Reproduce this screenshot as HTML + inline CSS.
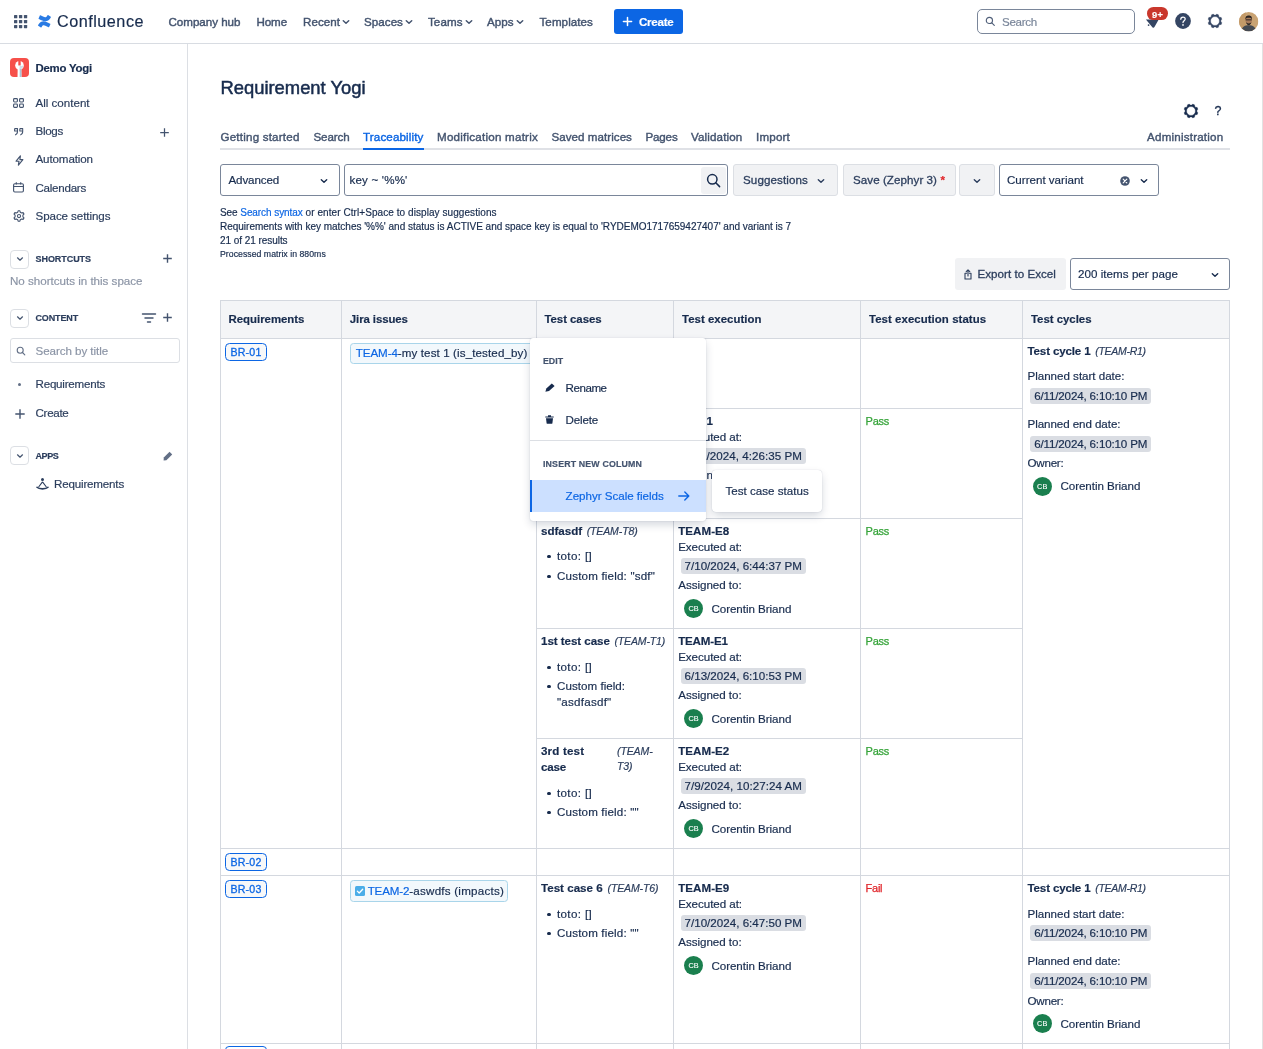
<!DOCTYPE html>
<html lang="en"><head>
<meta charset="utf-8">
<title>Traceability - Requirement Yogi - Confluence</title>
<style>
*{box-sizing:border-box;margin:0;padding:0}
html,body{width:1263px;height:1049px;overflow:hidden;background:#fff}
body{font-family:"Liberation Sans",Arial,sans-serif;color:#172b4d;font-size:12px;position:relative;will-change:transform;-webkit-text-stroke-width:.18px}
.abs{position:absolute}
.t{position:absolute;white-space:nowrap;line-height:16px;font-size:11.6px;color:#172b4d}
.m{-webkit-text-stroke:.3px currentColor}
a{color:#0c66e4;text-decoration:none}
svg{display:block;overflow:visible}
#topnav{position:absolute;left:0;top:0;width:1263px;height:44px;border-bottom:1px solid #d8dce2;background:#fff}
.nav{position:absolute;top:13.5px;font-size:11.6px;-webkit-text-stroke:.42px #44546f;color:#44546f;white-space:nowrap;line-height:16px}
#side{position:absolute;left:0;top:44px;width:188px;height:1005px;border-right:1px solid #dcdfe4;background:#fff}
.sitem{position:absolute;left:35.5px;font-size:11.6px;color:#2c3e5d;white-space:nowrap;line-height:16px}
.shead{position:absolute;left:35.5px;font-size:9px;font-weight:bold;color:#2c3e5d;white-space:nowrap;line-height:12px}
.tog{position:absolute;left:10px;width:19px;height:19px;border:1px solid #dcdfe4;border-radius:4px;background:#fff}
.tab{position:absolute;top:128.5px;font-size:11.6px;color:#44546f;white-space:nowrap;line-height:16px;-webkit-text-stroke:.4px #44546f}
.box{position:absolute;border:1px solid #7a869a;border-radius:3px;background:#fff}
.btn{position:absolute;border:1px solid #dcdfe4;border-radius:3px;background:#f1f2f4}
.vl{position:absolute;width:1px;background:#d4d8df}
.hl{position:absolute;height:1px;background:#d4d8df}
.th{position:absolute;top:311px;font-size:11.4px;font-weight:bold;color:#172b4d;white-space:nowrap;line-height:16px}
.b{font-weight:bold}
.i{font-style:italic;font-size:10.5px;color:#2c3e5d}
.date{position:absolute;height:15.500px;background:#dadde3;border-radius:3px}
.av{position:absolute;width:19px;height:19px;border-radius:50%;background:#1a7f4e;color:#fff;font-size:7.300px;-webkit-text-stroke:.12px #fff;text-align:center;line-height:19.500px}
.key{position:absolute;width:42px;height:18px;border:1.3px solid #0c66e4;border-radius:4.5px;background:#f7f8f9}
.pass{color:#36a43a;-webkit-text-stroke:.25px #36a43a}
.fail{color:#e0262b;-webkit-text-stroke:.25px #e0262b}
</style>
</head>
<body>
<div id="topnav">
<svg class="abs" style="left:13.900px;top:14.900px" width="14" height="14" viewBox="0 0 14 14" fill="#44546f"><rect x="0.00" y="0.00" width="3.300" height="3.300" rx=".6"></rect><rect x="4.95" y="0.00" width="3.300" height="3.300" rx=".6"></rect><rect x="9.90" y="0.00" width="3.300" height="3.300" rx=".6"></rect><rect x="0.00" y="4.95" width="3.300" height="3.300" rx=".6"></rect><rect x="4.95" y="4.95" width="3.300" height="3.300" rx=".6"></rect><rect x="9.90" y="4.95" width="3.300" height="3.300" rx=".6"></rect><rect x="0.00" y="9.90" width="3.300" height="3.300" rx=".6"></rect><rect x="4.95" y="9.90" width="3.300" height="3.300" rx=".6"></rect><rect x="9.90" y="9.90" width="3.300" height="3.300" rx=".6"></rect></svg>
<svg class="abs" style="left:38px;top:15.200px" width="13" height="12.600" viewBox="0 0 256 246"><path d="M9.26 187.33c-2.64 4.307-5.607 9.305-8.126 13.287a8.127 8.127 0 0 0 2.722 11.052l52.823 32.507a8.127 8.127 0 0 0 11.256-2.763c2.113-3.536 4.835-8.127 7.801-13.044 20.926-34.538 41.974-30.312 79.925-12.19l52.376 24.908a8.127 8.127 0 0 0 10.93-4.063l25.152-56.886a8.127 8.127 0 0 0-4.063-10.646c-11.052-5.201-33.034-15.562-52.823-25.111-71.189-34.579-131.691-32.344-177.972 42.949z" fill="#2a7be4"></path><path d="M246.115 58.232c2.641-4.307 5.607-9.305 8.127-13.287a8.127 8.127 0 0 0-2.723-11.052L198.696 1.386a8.127 8.127 0 0 0-11.580 2.682c-2.113 3.535-4.835 8.127-7.802 13.043-20.926 34.538-41.974 30.313-79.925 12.190L47.176 4.515a8.127 8.127 0 0 0-10.930 4.063L11.093 65.465a8.127 8.127 0 0 0 4.063 10.645c11.052 5.202 33.035 15.563 52.823 25.112 71.351 34.538 131.854 32.222 178.135-42.990z" fill="#2a7be4"></path></svg>
<div class="t" style="left: 57px; top: 9px; font-size: 16.2px; line-height: 24px; color: rgb(23, 43, 77); letter-spacing: 0.51px;">Confluence</div>
<div class="nav" style="left: 168.5px; letter-spacing: -0.02px;">Company hub</div>
<div class="nav" style="left: 256.5px; letter-spacing: -0.11px;">Home</div>
<div class="nav" style="left: 303px; letter-spacing: 0.04px;">Recent</div>
<div class="nav" style="left: 364px; letter-spacing: 0.05px;">Spaces</div>
<div class="nav" style="left: 428px; letter-spacing: 0.07px;">Teams</div>
<div class="nav" style="left: 487px; letter-spacing: 0.02px;">Apps</div>
<div class="nav" style="left: 539.5px; letter-spacing: 0.07px;">Templates</div>
<svg class="abs" style="left:342px;top:18px" width="8" height="8" viewBox="0 0 8 8"><path d="M1.3 2.8 L4 5.3 L6.7 2.8" fill="none" stroke="#44546f" stroke-width="1.5" stroke-linecap="round" stroke-linejoin="round"></path></svg>
<svg class="abs" style="left:404.5px;top:18px" width="8" height="8" viewBox="0 0 8 8"><path d="M1.3 2.8 L4 5.3 L6.7 2.8" fill="none" stroke="#44546f" stroke-width="1.5" stroke-linecap="round" stroke-linejoin="round"></path></svg>
<svg class="abs" style="left:465px;top:18px" width="8" height="8" viewBox="0 0 8 8"><path d="M1.3 2.8 L4 5.3 L6.7 2.8" fill="none" stroke="#44546f" stroke-width="1.5" stroke-linecap="round" stroke-linejoin="round"></path></svg>
<svg class="abs" style="left:515.5px;top:18px" width="8" height="8" viewBox="0 0 8 8"><path d="M1.3 2.8 L4 5.3 L6.7 2.8" fill="none" stroke="#44546f" stroke-width="1.5" stroke-linecap="round" stroke-linejoin="round"></path></svg>
<div class="abs" style="left:614px;top:9px;width:69px;height:25px;border-radius:3px;background:#0c66e4"></div>
<svg class="abs" style="left:621.5px;top:16px" width="11" height="11" viewBox="0 0 11 11"><path d="M5.500 1.400 V9.600 M1.400 5.500 H9.600" stroke="#fff" stroke-width="1.500" stroke-linecap="round"></path></svg>
<div class="t" style="left: 639px; top: 13.5px; font-size: 11.6px; font-weight: bold; color: rgb(255, 255, 255); letter-spacing: -0.27px;">Create</div>
<div class="abs" style="left:977px;top:9px;width:158px;height:25px;border:1px solid #7a869a;border-radius:5px;background:#fff"></div>
<svg class="abs" style="left:984.5px;top:15.5px" width="11" height="11" viewBox="0 0 11 11"><circle cx="4.400" cy="4.400" r="3.100" fill="none" stroke="#505f79" stroke-width="1.150"></circle><path d="M6.800 6.800 L9.300 9.300" stroke="#505f79" stroke-width="1.150" stroke-linecap="round"></path></svg>
<div class="t" style="left: 1002px; top: 13.5px; font-size: 11.6px; color: rgb(122, 134, 154); letter-spacing: -0.29px;">Search</div>
<svg class="abs" style="left:1144px;top:14px" width="16" height="16" viewBox="0 0 16 16"><path d="M1.900 5.600 L14.700 5.600 L10.600 12.800 C10 13.900 9.300 14.200 8.600 13.400 Z" fill="#344563"></path><circle cx="4.600" cy="11.100" r=".9" fill="#344563"></circle></svg>
<div class="abs" style="left:1147px;top:6.800px;width:21.200px;height:12.800px;border-radius:6.400px;background:#c9372c"></div>
<div class="t" style="left: 1152px; top: 8.7px; color: rgb(255, 255, 255); font-size: 9.3px; font-weight: bold; line-height: 13px; letter-spacing: 0.3px;">9+</div>
<svg class="abs" style="left:1175.400px;top:13.300px" width="16" height="16" viewBox="0 0 16 16"><circle cx="8" cy="8" r="7.900" fill="#344563"></circle><path d="M5.800 6.300 C5.800 4.900 6.800 4.100 8 4.100 C9.200 4.100 10.200 4.900 10.200 6.100 C10.200 7.700 8 7.700 8 9.500" fill="none" stroke="#fff" stroke-width="1.250" stroke-linecap="round"></path><circle cx="8" cy="11.900" r=".85" fill="#fff"></circle></svg>
<svg class="abs" style="left:1207.100px;top:13.100px" width="16" height="16" viewBox="0 0 16 16"><path fill-rule="evenodd" fill="#344563" stroke="#344563" stroke-width=".4" stroke-linejoin="round" d="M13.92 8.99 L14.89 9.71 L14.08 11.66 L12.88 11.49 L11.49 12.88 L11.66 14.08 L9.71 14.89 L8.99 13.92 L7.01 13.92 L6.29 14.89 L4.34 14.08 L4.51 12.88 L3.12 11.49 L1.92 11.66 L1.11 9.71 L2.08 8.99 L2.08 7.01 L1.11 6.29 L1.92 4.34 L3.12 4.51 L4.51 3.12 L4.34 1.92 L6.29 1.11 L7.01 2.08 L8.99 2.08 L9.71 1.11 L11.66 1.92 L11.49 3.12 L12.88 4.51 L14.08 4.34 L14.89 6.29 L13.92 7.01 Z M12.45 8.00 A4.45 4.45 0 1 0 3.55 8.00 A4.45 4.45 0 1 0 12.45 8.00 Z"></path></svg>
<svg class="abs" style="left:1238.800px;top:11.800px" width="19.400" height="19.400" viewBox="0 0 20 20"><defs><clipPath id="avc"><circle cx="10" cy="10" r="10"></circle></clipPath></defs><g clip-path="url(#avc)"><rect width="20" height="20" fill="#c9a373"></rect><rect x="0" y="0" width="7" height="20" fill="#c39a68"></rect><path d="M2.500 20 C2.800 15.500 5.500 13.600 10 13.600 C14.500 13.600 17.200 15.500 17.500 20 Z" fill="#454a52"></path><ellipse cx="10" cy="8.600" rx="3.300" ry="4.100" fill="#a87b5a"></ellipse><path d="M6.600 7.800 C6.300 4.600 8 3.600 10 3.600 C12 3.600 13.700 4.600 13.400 7.800 C12.800 6.400 12 6 10 6 C8 6 7.200 6.400 6.600 7.800 Z" fill="#2a2422"></path><path d="M7.200 10.400 C7.600 12.600 8.700 13.600 10 13.600 C11.300 13.600 12.400 12.600 12.800 10.400 C12 11.500 11.200 11.800 10 11.800 C8.800 11.800 8 11.500 7.200 10.400 Z" fill="#2f2926"></path><rect x="6.900" y="7.600" width="6.200" height="1" fill="#2a2422"></rect></g></svg>
</div>
<div id="side">
<div class="abs" style="left:10px;top:14px;width:19px;height:19px;border-radius:4px;background:#f6504a;overflow:hidden"><svg width="19" height="19" viewBox="0 0 19 19"><circle cx="9.500" cy="7.400" r="4.300" fill="#fff"></circle><rect x="8.300" y="2.800" width="2.400" height="4.700" rx=".6" fill="#f6504a"></rect><path d="M7.700 9.500 H11.300 L11.500 19 H7.500 Z" fill="#fff"></path><path d="M9.700 10.500 H11.320 L11.500 19 H9.700 Z" fill="#a9c5d6"></path><path d="M9.600 7.500 A3.900 3.900 0 0 0 13.400 7.300 L13.300 8.300 A3.900 3.900 0 0 1 9.600 11.200 Z" fill="#cfdde6"></path></svg></div>
<div class="t b" style="left: 35.5px; top: 16px; font-size: 11.4px; color: rgb(23, 43, 77); letter-spacing: -0.22px;">Demo Yogi</div>

<svg class="abs" style="left:13px;top:54px" width="11" height="10" viewBox="0 0 11 10" fill="none" stroke="#44546f" stroke-width="1.150"><rect x=".6" y=".6" width="3.800" height="3.400" rx=".9"></rect><rect x="6.600" y=".6" width="3.800" height="3.400" rx=".9"></rect><rect x=".6" y="6" width="3.800" height="3.400" rx=".9"></rect><rect x="6.600" y="6" width="3.800" height="3.400" rx=".9"></rect></svg>
<div class="sitem" style="top: 51px; letter-spacing: -0.01px;">All content</div>

<svg class="abs" style="left:14.300px;top:83.800px" width="9.500" height="7.500" viewBox="0 0 9.500 7.500" fill="none" stroke="#44546f" stroke-width="1.050" stroke-linejoin="round"><path d="M.6 .6 H3.500 V3.600 C3.500 5.400 2.700 6.500 1.100 6.900 M.6 .6 V3 H3.300"></path><path d="M5.800 .6 H8.700 V3.600 C8.700 5.400 7.900 6.500 6.300 6.900 M5.800 .6 V3 H8.500"></path></svg>
<div class="sitem" style="top: 79px; letter-spacing: -0.3px;">Blogs</div>
<svg class="abs" style="left:160px;top:84px" width="9" height="9" viewBox="0 0 9 9"><path d="M4.5 .2 V8.800 M.2 4.500 H8.800" stroke="#44546f" stroke-width="1.250"></path></svg>

<svg class="abs" style="left:15px;top:111px" width="9" height="11" viewBox="0 0 9 11"><path d="M5.400 .8 L1.100 6.200 H4 L3.400 10.200 L7.900 4.600 H4.900 Z" fill="none" stroke="#44546f" stroke-width="1.150" stroke-linejoin="round"></path></svg>
<div class="sitem" style="top: 106.5px; letter-spacing: -0.12px;">Automation</div>

<svg class="abs" style="left:13px;top:138.400px" width="11" height="10.600" viewBox="0 0 11 10.600" fill="none" stroke="#44546f" stroke-width="1.150"><rect x=".6" y="1.800" width="9.800" height="8.200" rx="1.200"></rect><path d="M.6 4.500 H10.400 M3.300 .2 V2.600 M7.700 .2 V2.600"></path></svg>
<div class="sitem" style="top: 136px; letter-spacing: -0.26px;">Calendars</div>

<svg class="abs" style="left:12.500px;top:165.900px" width="12" height="12" viewBox="0 0 12 12" fill="none" stroke="#44546f"><circle cx="6" cy="6" r="1.600" stroke-width="1.050"></circle><path d="M9.91 6.83 L10.97 7.85 L10.08 9.38 L8.68 8.97 L7.24 9.80 L6.88 11.23 L5.12 11.23 L4.76 9.80 L3.32 8.97 L1.92 9.38 L1.03 7.85 L2.09 6.83 L2.09 5.17 L1.03 4.15 L1.92 2.62 L3.32 3.03 L4.76 2.20 L5.12 0.77 L6.88 0.77 L7.24 2.20 L8.68 3.03 L10.08 2.62 L10.97 4.15 L9.91 5.17 Z" stroke-width="1.100" stroke-linejoin="round"></path></svg>
<div class="sitem" style="top: 164px; letter-spacing: -0.08px;">Space settings</div>

<div class="tog" style="top:205.500px"></div>
<svg class="abs" style="left:15.500px;top:211px" width="8" height="8" viewBox="0 0 8 8"><path d="M1.500 2.800 L4 5.200 L6.500 2.800" fill="none" stroke="#44546f" stroke-width="1.2" stroke-linecap="round" stroke-linejoin="round"></path></svg>
<div class="shead" style="top: 209px; letter-spacing: -0.06px;">SHORTCUTS</div>
<svg class="abs" style="left:163px;top:210px" width="9" height="9" viewBox="0 0 9 9"><path d="M4.500 .2 V8.800 M.2 4.500 H8.800" stroke="#44546f" stroke-width="1.400"></path></svg>
<div class="t" style="left: 10px; top: 229px; font-size: 11.6px; color: rgb(140, 149, 166); letter-spacing: -0.01px;">No shortcuts in this space</div>

<div class="tog" style="top:264.500px"></div>
<svg class="abs" style="left:15.500px;top:270px" width="8" height="8" viewBox="0 0 8 8"><path d="M1.500 2.800 L4 5.200 L6.500 2.800" fill="none" stroke="#44546f" stroke-width="1.2" stroke-linecap="round" stroke-linejoin="round"></path></svg>
<div class="shead" style="top: 268px; letter-spacing: -0.14px;">CONTENT</div>
<svg class="abs" style="left:141.500px;top:269px" width="14" height="10" viewBox="0 0 14 10"><path d="M.5 1 H13.500 M3 5 H11 M5.500 9 H8.500" stroke="#44546f" stroke-width="1.450" stroke-linecap="round"></path></svg>
<svg class="abs" style="left:163px;top:269px" width="9" height="9" viewBox="0 0 9 9"><path d="M4.500 .2 V8.800 M.2 4.500 H8.800" stroke="#44546f" stroke-width="1.400"></path></svg>

<div class="abs" style="left:10px;top:294.300px;width:170px;height:25.200px;border:1px solid #dcdfe4;border-radius:3px;background:#fff"></div>
<svg class="abs" style="left:15.500px;top:302px" width="10" height="10" viewBox="0 0 10 10"><circle cx="4.200" cy="4.200" r="3" fill="none" stroke="#626f86" stroke-width="1.100"></circle><path d="M6.500 6.500 L8.800 8.800" stroke="#626f86" stroke-width="1.100" stroke-linecap="round"></path></svg>
<div class="t" style="left: 35.5px; top: 299px; font-size: 11.6px; color: rgb(140, 149, 166); letter-spacing: -0.06px;">Search by title</div>

<div class="abs" style="left:18px;top:339px;width:3px;height:3px;border-radius:50%;background:#626f86"></div>
<div class="sitem" style="top: 332px; letter-spacing: -0.22px;">Requirements</div>

<svg class="abs" style="left:14.500px;top:364.500px" width="10" height="10" viewBox="0 0 10 10"><path d="M5 .3 V9.700 M.3 5 H9.700" stroke="#44546f" stroke-width="1.400"></path></svg>
<div class="sitem" style="top: 361px; letter-spacing: -0.3px;">Create</div>

<div class="tog" style="top:402px"></div>
<svg class="abs" style="left:15.500px;top:407.500px" width="8" height="8" viewBox="0 0 8 8"><path d="M1.500 2.800 L4 5.200 L6.500 2.800" fill="none" stroke="#44546f" stroke-width="1.200" stroke-linecap="round" stroke-linejoin="round"></path></svg>
<div class="shead" style="top: 406px; letter-spacing: -0.38px;">APPS</div>
<svg class="abs" style="left:163px;top:407px" width="10" height="10" viewBox="0 0 10 10"><path d="M6.600 .8 L9.200 3.400 L3.400 9.200 L.6 9.400 L.8 6.600 Z" fill="#626f86"></path></svg>

<svg class="abs" style="left:35.500px;top:433px" width="13" height="13" viewBox="0 0 13 13"><circle cx="6.500" cy="2.500" r="1.500" fill="#2c3e5d"></circle><path d="M6.500 4.800 L2.600 10 M6.500 4.800 L10.400 10" stroke="#2c3e5d" stroke-width="1.100" fill="none"></path><path d="M1 10.300 C3 12.400 10 12.400 12 10.300" stroke="#2c3e5d" stroke-width="1.600" fill="none" stroke-linecap="round"></path></svg>
<div class="sitem" style="left: 54px; top: 432px; letter-spacing: -0.18px;">Requirements</div>
</div>
<div id="main">
<div class="t" style="left: 220.5px; top: 75.6px; font-size: 18.4px; line-height: 24px; color: rgb(23, 43, 77); -webkit-text-stroke: 0.5px rgb(23, 43, 77); letter-spacing: -0.01px;">Requirement Yogi</div>
<svg class="abs" style="left:1183.100px;top:103.300px" width="16" height="16" viewBox="0 0 16 16"><path fill-rule="evenodd" fill="#172b4d" stroke="#172b4d" stroke-width=".4" stroke-linejoin="round" d="M13.92 8.99 L14.89 9.71 L14.08 11.66 L12.88 11.49 L11.49 12.88 L11.66 14.08 L9.71 14.89 L8.99 13.92 L7.01 13.92 L6.29 14.89 L4.34 14.08 L4.51 12.88 L3.12 11.49 L1.92 11.66 L1.11 9.71 L2.08 8.99 L2.08 7.01 L1.11 6.29 L1.92 4.34 L3.12 4.51 L4.51 3.12 L4.34 1.92 L6.29 1.11 L7.01 2.08 L8.99 2.08 L9.71 1.11 L11.66 1.92 L11.49 3.12 L12.88 4.51 L14.08 4.34 L14.89 6.29 L13.92 7.01 Z M12.45 8.00 A4.45 4.45 0 1 0 3.55 8.00 A4.45 4.45 0 1 0 12.45 8.00 Z"></path></svg>
<div class="t m" style="left:1214.500px;top:103px;font-size:12.500px;color:#172b4d">?</div>

<div class="tab" style="left: 220.5px; letter-spacing: 0.2px;">Getting started</div>
<div class="tab" style="left: 313.5px; letter-spacing: -0.12px;">Search</div>
<div class="tab" style="left: 363px; color: rgb(12, 102, 228); -webkit-text-stroke-color: rgb(12, 102, 228); letter-spacing: 0.14px;">Traceability</div>
<div class="tab" style="left: 437px; letter-spacing: 0.23px;">Modification matrix</div>
<div class="tab" style="left: 551.5px; letter-spacing: 0.04px;">Saved matrices</div>
<div class="tab" style="left: 645.5px; letter-spacing: -0.17px;">Pages</div>
<div class="tab" style="left: 691px; letter-spacing: 0.14px;">Validation</div>
<div class="tab" style="left: 756px; letter-spacing: 0.19px;">Import</div>
<div class="tab" style="left: 1147.1px; letter-spacing: 0.2px;">Administration</div>
<div class="abs" style="left:220px;top:148px;width:1010px;height:2px;background:#dfe1e6"></div>
<div class="abs" style="left:363px;top:148px;width:61px;height:2px;background:#0c66e4"></div>

<div class="box" style="left:220px;top:164px;width:120px;height:32px"></div>
<div class="t" style="left: 228.5px; top: 172px; letter-spacing: -0.13px;">Advanced</div>
<svg class="abs" style="left:320px;top:176.500px" width="8" height="8" viewBox="0 0 8 8"><path d="M1.300 2.800 L4 5.300 L6.700 2.800" fill="none" stroke="#172b4d" stroke-width="1.400" stroke-linecap="round" stroke-linejoin="round"></path></svg>

<div class="box" style="left:344px;top:164px;width:384px;height:32px"></div>
<div class="t" style="left: 349.5px; top: 172px; letter-spacing: 0.17px;">key ~ '%%'</div>
<div class="abs" style="left:701px;top:166.500px;width:25px;height:27px;background:#f1f2f4;border-radius:3px"></div>
<svg class="abs" style="left:706px;top:172.500px" width="15" height="15" viewBox="0 0 15 15"><circle cx="6.300" cy="6.300" r="4.700" fill="none" stroke="#172b4d" stroke-width="1.500"></circle><path d="M9.800 9.800 L13.600 13.600" stroke="#172b4d" stroke-width="1.500" stroke-linecap="round"></path></svg>

<div class="btn" style="left:732.500px;top:164px;width:105px;height:32px"></div>
<div class="t m" style="left: 743px; top: 172px; color: rgb(44, 62, 93); letter-spacing: 0.11px;">Suggestions</div>
<svg class="abs" style="left:816.500px;top:176.500px" width="8" height="8" viewBox="0 0 8 8"><path d="M1.300 2.800 L4 5.300 L6.700 2.800" fill="none" stroke="#2c3e5d" stroke-width="1.400" stroke-linecap="round" stroke-linejoin="round"></path></svg>

<div class="btn" style="left:842.500px;top:164px;width:113px;height:32px"></div>
<div class="t m" style="left: 853px; top: 172px; color: rgb(44, 62, 93); letter-spacing: 0.06px;">Save (Zephyr 3)</div>
<div class="t b" style="left:940.500px;top:172px;color:#e0262b;font-size:11.600px">*</div>

<div class="btn" style="left:958.500px;top:164px;width:36.500px;height:32px"></div>
<svg class="abs" style="left:973px;top:176.500px" width="8" height="8" viewBox="0 0 8 8"><path d="M1.300 2.800 L4 5.300 L6.700 2.800" fill="none" stroke="#2c3e5d" stroke-width="1.400" stroke-linecap="round" stroke-linejoin="round"></path></svg>

<div class="box" style="left:999px;top:164px;width:159.500px;height:32px"></div>
<div class="t" style="left: 1007px; top: 172px; letter-spacing: -0.01px;">Current variant</div>
<svg class="abs" style="left:1119.500px;top:175.500px" width="10" height="10" viewBox="0 0 10 10"><circle cx="5" cy="5" r="4.800" fill="#44546f"></circle><path d="M3.200 3.200 L6.800 6.800 M6.800 3.200 L3.200 6.800" stroke="#fff" stroke-width="1.200" stroke-linecap="round"></path></svg>
<svg class="abs" style="left:1139.500px;top:176.500px" width="8" height="8" viewBox="0 0 8 8"><path d="M1.300 2.800 L4 5.300 L6.700 2.800" fill="none" stroke="#172b4d" stroke-width="1.400" stroke-linecap="round" stroke-linejoin="round"></path></svg>

<div class="t" style="left:220px;top:206px;font-size:10px;line-height:13px"><span style="letter-spacing: -0.1px;">See</span> <a style="letter-spacing: -0.07px;">Search syntax</a> <span style="letter-spacing: 0.07px;">or enter Ctrl+Space to display suggestions</span></div>
<div class="t" style="left: 220px; top: 220px; font-size: 10px; line-height: 13px; letter-spacing: -0.01px;">Requirements with key matches '%%' and status is ACTIVE and space key is equal to 'RYDEMO1717659427407' and variant is 7</div>
<div class="t" style="left: 220px; top: 233.5px; font-size: 10px; line-height: 13px; letter-spacing: -0.05px;">21 of 21 results</div>
<div class="t" style="left: 220px; top: 247.5px; font-size: 8.7px; line-height: 12px; letter-spacing: 0.04px;">Processed matrix in 880ms</div>

<div class="abs" style="left:955px;top:258px;width:110.500px;height:32px;background:#f1f2f4;border-radius:3px"></div>
<svg class="abs" style="left:963.500px;top:268.500px" width="8" height="11" viewBox="0 0 8 11" fill="none" stroke="#2c3e5d" stroke-width="1.100" stroke-linecap="round" stroke-linejoin="round"><path d="M2.600 4.300 H1 V10 H7 V4.300 H5.400 M4 7 V1 M2.200 2.600 L4 .8 L5.800 2.600"></path></svg>
<div class="t m" style="left: 977.5px; top: 266px; color: rgb(44, 62, 93); letter-spacing: 0.03px;">Export to Excel</div>
<div class="box" style="left:1070px;top:258px;width:159.500px;height:32px"></div>
<div class="t" style="left: 1078px; top: 266px; letter-spacing: 0.04px;">200 items per page</div>
<svg class="abs" style="left:1211px;top:270.500px" width="8" height="8" viewBox="0 0 8 8"><path d="M1.300 2.800 L4 5.300 L6.700 2.800" fill="none" stroke="#172b4d" stroke-width="1.400" stroke-linecap="round" stroke-linejoin="round"></path></svg>
</div>
<div id="tbl">
<div class="abs" style="left:220px;top:300px;width:1010px;height:38px;background:#f4f5f7"></div>
<div class="vl" style="left:220px;top:300px;height:749px"></div>
<div class="vl" style="left:341px;top:300px;height:749px"></div>
<div class="vl" style="left:536px;top:300px;height:749px"></div>
<div class="vl" style="left:673px;top:300px;height:749px"></div>
<div class="vl" style="left:860px;top:300px;height:749px"></div>
<div class="vl" style="left:1022px;top:300px;height:749px"></div>
<div class="vl" style="left:1229px;top:300px;height:749px"></div>
<div class="hl" style="left:220px;top:300px;width:1010px"></div>
<div class="hl" style="left:220px;top:338px;width:1010px"></div>
<div class="hl" style="left:220px;top:848px;width:1010px"></div>
<div class="hl" style="left:220px;top:875px;width:1010px"></div>
<div class="hl" style="left:220px;top:1043px;width:1010px"></div>
<div class="hl" style="left:536px;top:408px;width:486px"></div>
<div class="hl" style="left:536px;top:518px;width:486px"></div>
<div class="hl" style="left:536px;top:628px;width:486px"></div>
<div class="hl" style="left:536px;top:738px;width:486px"></div>
<div class="th" style="left: 228.5px;">Requirements</div>
<div class="th" style="left: 349.8px; letter-spacing: -0.08px;">Jira issues</div>
<div class="th" style="left: 544.5px; letter-spacing: -0.04px;">Test cases</div>
<div class="th" style="left: 682px; letter-spacing: 0.04px;">Test execution</div>
<div class="th" style="left: 869px; letter-spacing: 0.07px;">Test execution status</div>
<div class="th" style="left: 1031px; letter-spacing: -0.01px;">Test cycles</div>
<div class="key" style="left:225px;top:343px"></div>
<div class="t m" style="left: 230.5px; top: 344px; color: rgb(12, 102, 228); font-size: 10.6px; letter-spacing: 0.19px;">BR-01</div>
<div class="key" style="left:225px;top:853px"></div>
<div class="t m" style="left: 230.5px; top: 854px; color: rgb(12, 102, 228); font-size: 10.6px; letter-spacing: 0.19px;">BR-02</div>
<div class="key" style="left:225px;top:880px"></div>
<div class="t m" style="left: 230.5px; top: 881px; color: rgb(12, 102, 228); font-size: 10.6px; letter-spacing: 0.19px;">BR-03</div>
<div class="abs" style="left:225px;top:1046px;width:42px;height:18px;border:1px solid #0c66e4;border-radius:4px;background:#fff"></div>
<div class="abs" style="left:350px;top:343px;width:186px;height:21px;border:1px solid #a9d5ea;border-radius:3.500px;background:#f2f8fc"></div>
<div class="t" style="left:355.800px;top:344.500px"><a style="letter-spacing: -0.09px;">TEAM-4</a><span style="letter-spacing: 0.11px;">-my test 1 (is_tested_by)</span></div>
<div class="abs" style="left:350px;top:880px;width:157.500px;height:21.500px;border:1px solid #a9d5ea;border-radius:3.500px;background:#f2f8fc"></div>
<svg class="abs" style="left:354.800px;top:886.100px" width="10" height="10" viewBox="0 0 10 10"><rect width="10" height="10" rx="1.500" fill="#4bade8"></rect><path d="M2.300 5.100 L4.200 7 L7.700 3.200" stroke="#fff" stroke-width="1.300" fill="none" stroke-linecap="round" stroke-linejoin="round"></path></svg>
<div class="t" style="left:367.700px;top:883.300px"><a style="letter-spacing: -0.17px;">TEAM-2</a><span style="letter-spacing: 0.24px;">-aswdfs (impacts)</span></div>
<div class="t b" style="left: 678.2px; top: 413px; letter-spacing: 0.44px;">RY-E1</div>
<div class="t" style="left: 678.2px; top: 429.4px; letter-spacing: -0.05px;">Executed at:</div>
<div class="date" style="left:681px;top:448px;width:124.500px"></div>
<div class="t" style="left: 684.5px; top: 448px; letter-spacing: 0.05px;">6/11/2024, 4:26:35 PM</div>
<div class="t" style="left: 678.2px; top: 467.2px; letter-spacing: -0.03px;">Assigned to:</div>
<div class="av" style="left:684px;top:488.7px">CB</div>
<div class="t" style="left: 711.4px; top: 491px; letter-spacing: -0.04px;">Corentin Briand</div>
<div class="t pass" style="left: 865.6px; top: 413px; font-size: 11px; letter-spacing: -0.27px;">Pass</div>
<div class="t b" style="left: 678.2px; top: 523px; letter-spacing: 0.04px;">TEAM-E8</div>
<div class="t" style="left: 678.2px; top: 539.4px; letter-spacing: -0.05px;">Executed at:</div>
<div class="date" style="left:681px;top:558px;width:124.500px"></div>
<div class="t" style="left: 684.5px; top: 558px; letter-spacing: 0.01px;">7/10/2024, 6:44:37 PM</div>
<div class="t" style="left: 678.2px; top: 577.2px; letter-spacing: -0.03px;">Assigned to:</div>
<div class="av" style="left:684px;top:598.7px">CB</div>
<div class="t" style="left: 711.4px; top: 601px; letter-spacing: -0.04px;">Corentin Briand</div>
<div class="t pass" style="left: 865.6px; top: 523px; font-size: 11px; letter-spacing: -0.27px;">Pass</div>
<div class="t b" style="left: 678.2px; top: 633px; letter-spacing: -0.2px;">TEAM-E1</div>
<div class="t" style="left: 678.2px; top: 649.4px; letter-spacing: -0.05px;">Executed at:</div>
<div class="date" style="left:681px;top:668px;width:124.500px"></div>
<div class="t" style="left: 684.5px; top: 668px; letter-spacing: 0.01px;">6/13/2024, 6:10:53 PM</div>
<div class="t" style="left: 678.2px; top: 687.2px; letter-spacing: -0.03px;">Assigned to:</div>
<div class="av" style="left:684px;top:708.7px">CB</div>
<div class="t" style="left: 711.4px; top: 711px; letter-spacing: -0.04px;">Corentin Briand</div>
<div class="t pass" style="left: 865.6px; top: 633px; font-size: 11px; letter-spacing: -0.27px;">Pass</div>
<div class="t b" style="left: 678.2px; top: 743px; letter-spacing: 0.04px;">TEAM-E2</div>
<div class="t" style="left: 678.2px; top: 759.4px; letter-spacing: -0.05px;">Executed at:</div>
<div class="date" style="left:681px;top:778px;width:124.500px"></div>
<div class="t" style="left: 684.5px; top: 778px; letter-spacing: 0.04px;">7/9/2024, 10:27:24 AM</div>
<div class="t" style="left: 678.2px; top: 797.2px; letter-spacing: -0.03px;">Assigned to:</div>
<div class="av" style="left:684px;top:818.7px">CB</div>
<div class="t" style="left: 711.4px; top: 821px; letter-spacing: -0.04px;">Corentin Briand</div>
<div class="t pass" style="left: 865.6px; top: 743px; font-size: 11px; letter-spacing: -0.27px;">Pass</div>
<div class="t b" style="left: 678.2px; top: 880px; letter-spacing: 0.04px;">TEAM-E9</div>
<div class="t" style="left: 678.2px; top: 896.4px; letter-spacing: -0.05px;">Executed at:</div>
<div class="date" style="left:681px;top:915px;width:124.500px"></div>
<div class="t" style="left: 684.5px; top: 915px; letter-spacing: 0.01px;">7/10/2024, 6:47:50 PM</div>
<div class="t" style="left: 678.2px; top: 934.2px; letter-spacing: -0.03px;">Assigned to:</div>
<div class="av" style="left:684px;top:955.7px">CB</div>
<div class="t" style="left: 711.4px; top: 958px; letter-spacing: -0.04px;">Corentin Briand</div>
<div class="t fail" style="left: 865.6px; top: 880px; font-size: 11px; letter-spacing: -0.26px;">Fail</div>
<div class="t b" style="left: 541px; top: 523px; letter-spacing: -0.03px;">sdfasdf</div>
<div class="t i" style="left: 586.7px; top: 522.5px; letter-spacing: -0.12px;">(TEAM-T8)</div>
<div class="abs" style="left:547px;top:554.7px;width:3.500px;height:3.500px;border-radius:50%;background:#172b4d"></div>
<div class="t" style="left: 557px; top: 548.2px; letter-spacing: 0.35px;">toto: []</div>
<div class="abs" style="left:547px;top:574.5px;width:3.500px;height:3.500px;border-radius:50%;background:#172b4d"></div>
<div class="t" style="left: 557px; top: 568px; letter-spacing: 0.18px;">Custom field: "sdf"</div>
<div class="t b" style="left: 541px; top: 633px; letter-spacing: -0.06px;">1st test case</div>
<div class="t i" style="left: 614.4px; top: 632.5px; letter-spacing: -0.12px;">(TEAM-T1)</div>
<div class="abs" style="left:547px;top:665.5px;width:3.500px;height:3.500px;border-radius:50%;background:#172b4d"></div>
<div class="t" style="left: 557px; top: 659px; letter-spacing: 0.35px;">toto: []</div>
<div class="abs" style="left:547px;top:684.8px;width:3.500px;height:3.500px;border-radius:50%;background:#172b4d"></div>
<div class="t" style="left: 557px; top: 678.3px; letter-spacing: 0.03px;">Custom field:</div>
<div class="t" style="left: 557px; top: 694.2px; letter-spacing: 0.24px;">"asdfasdf"</div>
<div class="t b" style="left: 541px; top: 743.3px; letter-spacing: 0.16px;">3rd test</div>
<div class="t b" style="left: 541px; top: 758.7px; letter-spacing: -0.2px;">case</div>
<div class="t i" style="left: 617px; top: 742.5px; letter-spacing: -0.1px;">(TEAM-</div>
<div class="t i" style="left: 617px; top: 758px; letter-spacing: -0.08px;">T3)</div>
<div class="abs" style="left:547px;top:791.8px;width:3.500px;height:3.500px;border-radius:50%;background:#172b4d"></div>
<div class="t" style="left: 557px; top: 785.3px; letter-spacing: 0.35px;">toto: []</div>
<div class="abs" style="left:547px;top:810.7px;width:3.500px;height:3.500px;border-radius:50%;background:#172b4d"></div>
<div class="t" style="left: 557px; top: 804.2px; letter-spacing: 0.17px;">Custom field: ""</div>
<div class="t b" style="left: 541px; top: 880px;">Test case 6</div>
<div class="t i" style="left: 607.5px; top: 879.5px; letter-spacing: -0.12px;">(TEAM-T6)</div>
<div class="abs" style="left:547px;top:912.8px;width:3.500px;height:3.500px;border-radius:50%;background:#172b4d"></div>
<div class="t" style="left: 557px; top: 906.3px; letter-spacing: 0.35px;">toto: []</div>
<div class="abs" style="left:547px;top:931.7px;width:3.500px;height:3.500px;border-radius:50%;background:#172b4d"></div>
<div class="t" style="left: 557px; top: 925.2px; letter-spacing: 0.17px;">Custom field: ""</div>
<div class="t b" style="left: 1027.5px; top: 343px; letter-spacing: -0.16px;">Test cycle 1</div>
<div class="t i" style="left: 1095.2px; top: 342.5px; letter-spacing: -0.28px;">(TEAM-R1)</div>
<div class="t" style="left: 1027.5px; top: 368.4px; letter-spacing: -0.02px;">Planned start date:</div>
<div class="date" style="left:1030px;top:388px;width:121px"></div>
<div class="t" style="left: 1034.2px; top: 388px; letter-spacing: -0.16px;">6/11/2024, 6:10:10 PM</div>
<div class="t" style="left: 1027.5px; top: 416px; letter-spacing: -0.07px;">Planned end date:</div>
<div class="date" style="left:1030px;top:436px;width:121px"></div>
<div class="t" style="left: 1034.2px; top: 436px; letter-spacing: -0.16px;">6/11/2024, 6:10:10 PM</div>
<div class="t" style="left: 1027.5px; top: 455.2px; letter-spacing: -0.23px;">Owner:</div>
<div class="av" style="left:1032.700px;top:476.7px">CB</div>
<div class="t" style="left: 1060.4px; top: 478.2px; letter-spacing: -0.04px;">Corentin Briand</div>
<div class="t b" style="left: 1027.5px; top: 880.3px; letter-spacing: -0.16px;">Test cycle 1</div>
<div class="t i" style="left: 1095.2px; top: 879.8px; letter-spacing: -0.28px;">(TEAM-R1)</div>
<div class="t" style="left: 1027.5px; top: 905.7px; letter-spacing: -0.02px;">Planned start date:</div>
<div class="date" style="left:1030px;top:925.3px;width:121px"></div>
<div class="t" style="left: 1034.2px; top: 925.3px; letter-spacing: -0.16px;">6/11/2024, 6:10:10 PM</div>
<div class="t" style="left: 1027.5px; top: 953.3px; letter-spacing: -0.07px;">Planned end date:</div>
<div class="date" style="left:1030px;top:973.3px;width:121px"></div>
<div class="t" style="left: 1034.2px; top: 973.3px; letter-spacing: -0.16px;">6/11/2024, 6:10:10 PM</div>
<div class="t" style="left: 1027.5px; top: 992.5px; letter-spacing: -0.23px;">Owner:</div>
<div class="av" style="left:1032.700px;top:1014.0px">CB</div>
<div class="t" style="left: 1060.4px; top: 1015.5px; letter-spacing: -0.04px;">Corentin Briand</div>
</div>
<div id="pop" class="abs" style="left:530px;top:338px;width:175.700px;height:182.500px;background:#fff;border-radius:3px;box-shadow:0 4px 10px -1px rgba(9,30,66,.2),0 0 1px rgba(9,30,66,.25)"></div>
<div class="t b" style="left: 543px; top: 355px; font-size: 8.8px; line-height: 12px; color: rgb(68, 84, 111); letter-spacing: -0.01px;">EDIT</div>
<svg class="abs" style="left:544.500px;top:383px" width="10" height="9" viewBox="0 0 10 9"><path d="M6.800 .4 L9.600 2.900 L4 8 L.4 8.700 L1.300 5.400 Z" fill="#172b4d"></path></svg>
<div class="t" style="left: 565.6px; top: 380.3px; letter-spacing: -0.47px;">Rename</div>
<svg class="abs" style="left:545px;top:415.300px" width="9" height="9" viewBox="0 0 9 9"><path d="M.3 1.400 H8.700 V2.600 H.3 Z M3 .2 H6 V1.400 H3 Z M1 3.200 H8 L7.400 8.200 C7.300 8.600 7 8.800 6.600 8.800 H2.400 C2 8.800 1.700 8.600 1.600 8.200 Z" fill="#172b4d"></path></svg>
<div class="t" style="left: 565.6px; top: 412.2px; letter-spacing: -0.17px;">Delete</div>
<div class="abs" style="left:530px;top:440px;width:175.700px;height:1px;background:#dcdfe4"></div>
<div class="t b" style="left: 543px; top: 457.5px; font-size: 8.8px; line-height: 12px; color: rgb(68, 84, 111); letter-spacing: 0.16px;">INSERT NEW COLUMN</div>
<div class="abs" style="left:530px;top:480px;width:175.700px;height:32px;background:#cce0ff"></div>
<div class="abs" style="left:530px;top:480px;width:2px;height:32px;background:#0c66e4"></div>
<div class="t" style="left: 565.6px; top: 488px; color: rgb(12, 102, 228); letter-spacing: -0.02px;">Zephyr Scale fields</div>
<svg class="abs" style="left:678px;top:490.500px" width="12" height="10" viewBox="0 0 12 10"><path d="M.8 5 H10.600 M6.800 1 L10.800 5 L6.800 9" stroke="#0c66e4" stroke-width="1.400" fill="none" stroke-linecap="round" stroke-linejoin="round"></path></svg>
<div class="abs" style="left:712px;top:470px;width:110px;height:41.500px;background:#fff;border-radius:4px;box-shadow:0 4px 10px -1px rgba(9,30,66,.2),0 0 1px rgba(9,30,66,.25)"></div>
<div class="t" style="left: 725.5px; top: 483px; letter-spacing: 0.01px;">Test case status</div>
<div class="abs" style="left:1262px;top:44px;width:1px;height:1005px;background:#e2e2e2"></div>


</body></html>
